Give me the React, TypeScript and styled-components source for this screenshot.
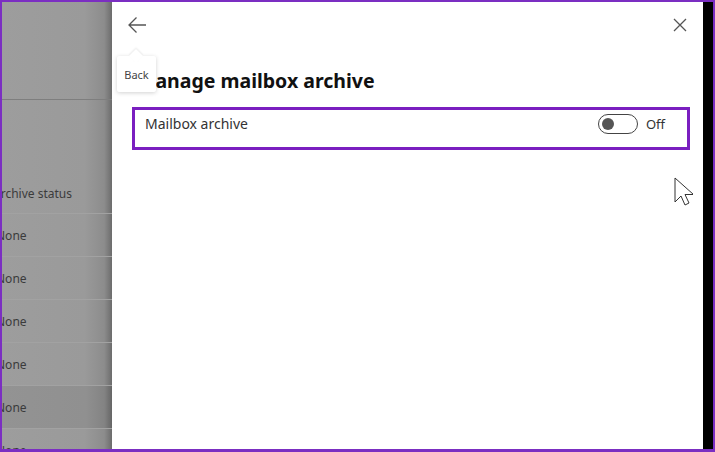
import React from "react";
import styled, { createGlobalStyle } from "styled-components";

const Global = createGlobalStyle`
  html, body { margin: 0; padding: 0; background: #fff; }
  body { font-family: "Noto Sans", "Open Sans", sans-serif; }
  * { box-sizing: border-box; }
`;

const Frame = styled.div`
  width: 715px;
  height: 452px;
  border: 2px solid #7b2ec2;
  border-bottom-width: 3px;
  display: flex;
  overflow: hidden;
  position: relative;
`;

const Backdrop = styled.div`
  width: 110px;
  flex: none;
  background: linear-gradient(90deg, #9d9d9d 0%, #9a9a9a 75%, #8c8c8c 93%, #6c6c6c 100%);
  display: flex;
  flex-direction: column;
  overflow: hidden;
`;

const BackdropHeader = styled.div`
  height: 98px;
  border-bottom: 1px solid #7e7e7e;
  flex: none;
`;

const ListRow = styled.div<{ $selected?: boolean; $header?: boolean }>`
  height: ${(p) => (p.$header ? "114px" : "43px")};
  display: flex;
  align-items: ${(p) => (p.$header ? "flex-end" : "center")};
  padding-bottom: ${(p) => (p.$header ? "11px" : "0")};
  border-bottom: 1px solid #a2a2a2;
  background: ${(p) => (p.$selected ? "rgba(0,0,0,0.06)" : "transparent")};
  font-size: 12px;
  color: #3b3b3b;
  flex: none;
`;

const ClippedText = styled.span<{ $shift: number }>`
  margin-left: ${(p) => p.$shift}px;
  white-space: nowrap;
`;

const Panel = styled.div`
  flex: 1;
  background: #fff;
  display: flex;
  flex-direction: column;
  position: relative;
`;

const PanelHeader = styled.div`
  height: 46px;
  display: flex;
  align-items: center;
  justify-content: space-between;
  padding: 0 16px 0 15px;
`;

const Content = styled.div`
  display: flex;
  flex-direction: column;
  padding-left: 20px;
`;

const IconButton = styled.button`
  background: none;
  border: none;
  padding: 0;
  display: flex;
  align-items: center;
  justify-content: center;
  color: #555;
  cursor: pointer;
`;

const Title = styled.h1`
  margin: 20px 0 0 5px;
  font-size: 19.5px;
  font-weight: 700;
  color: #111;
  line-height: 26px;
`;

const SettingBox = styled.div`
  margin-top: 13px;
  width: 558px;
  height: 43px;
  border: 3px solid #7a1fc0;
  display: flex;
  align-items: flex-start;
  justify-content: space-between;
  padding: 4px 22px 0 10px;
`;

const SettingLabel = styled.span`
  font-size: 14px;
  color: #333;
  line-height: 20px;
`;

const ToggleGroup = styled.div`
  display: flex;
  align-items: center;
  gap: 8px;
`;

const ToggleTrack = styled.div`
  width: 40px;
  height: 20px;
  border: 1px solid #444;
  border-radius: 10px;
  display: flex;
  align-items: center;
  padding-left: 3px;
`;

const ToggleKnob = styled.div`
  width: 12px;
  height: 12px;
  border-radius: 50%;
  background: #555;
`;

const OffText = styled.span`
  font-size: 13px;
  color: #333;
  line-height: 20px;
`;

const Tooltip = styled.div`
  position: absolute;
  left: 5px;
  top: 54px;
  width: 39px;
  height: 36px;
  background: #fff;
  box-shadow: 0 1px 4px rgba(0, 0, 0, 0.18);
  border-radius: 2px;
  font-size: 11px;
  color: #444;
  display: flex;
  align-items: center;
  justify-content: center;
  &::before {
    content: "";
    position: absolute;
    top: -5px;
    left: 14px;
    width: 10px;
    height: 10px;
    background: #fff;
    transform: rotate(45deg);
    box-shadow: -1px -1px 2px rgba(0, 0, 0, 0.08);
  }
`;

const TooltipText = styled.span`
  position: relative;
`;

const Cursor = styled.svg`
  position: absolute;
  left: 561px;
  top: 174px;
`;

const BlackStrip = styled.div`
  width: 10px;
  flex: none;
  background: #000;
`;

const rows = [false, false, false, false, true, false];

export default function App() {
  return (
    <>
      <Global />
      <Frame>
        <Backdrop>
          <BackdropHeader />
          <ListRow $header>
            <ClippedText $shift={-9}>Archive status</ClippedText>
          </ListRow>
          {rows.map((sel, i) => (
            <ListRow key={i} $selected={sel}>
              <ClippedText $shift={-6}>None</ClippedText>
            </ListRow>
          ))}
        </Backdrop>
        <Panel>
          <PanelHeader>
            <IconButton aria-label="Back">
              <svg width="20" height="18" viewBox="0 0 20 18" fill="none" stroke="#555" strokeWidth="1.3">
                <path d="M19 9H2M9.5 1.5L2 9l7.5 7.5" />
              </svg>
            </IconButton>
            <IconButton aria-label="Close">
              <svg width="14" height="14" viewBox="0 0 14 14" fill="none" stroke="#555" strokeWidth="1.3">
                <path d="M1 1l12 12M13 1L1 13" />
              </svg>
            </IconButton>
          </PanelHeader>
          <Content>
            <Title>Manage mailbox archive</Title>
            <SettingBox>
              <SettingLabel>Mailbox archive</SettingLabel>
              <ToggleGroup>
                <ToggleTrack>
                  <ToggleKnob />
                </ToggleTrack>
                <OffText>Off</OffText>
              </ToggleGroup>
            </SettingBox>
          </Content>
          <Tooltip>
            <TooltipText>Back</TooltipText>
          </Tooltip>
          <Cursor width="20" height="32" viewBox="0 0 20 32">
            <path d="M2 2v24l6-6 4 9 4-2-4-8.5h8.5z" fill="#fff" stroke="#333" strokeWidth="1" strokeLinejoin="round" />
          </Cursor>
        </Panel>
        <BlackStrip />
      </Frame>
    </>
  );
}
